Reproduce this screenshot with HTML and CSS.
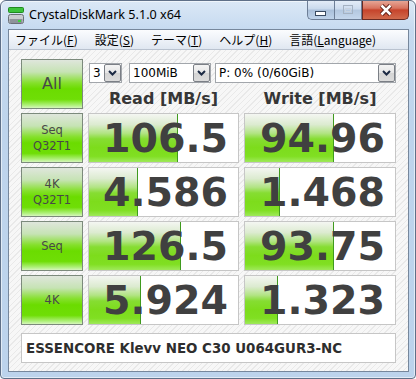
FILE: index.html
```html
<!DOCTYPE html>
<html lang="ja">
<head>
  <meta charset="UTF-8">
  <title>CrystalDiskMark 5.1.0 x64</title>
  <link rel="stylesheet" href="styles.css">
</head>
<body>
  <div class="window">
    <div class="titlebar">
      <svg class="app-icon" width="17" height="18" viewBox="0 0 17 18">
        <rect x="0.5" y="0.5" width="15" height="5" rx="1" fill="#3cc23c" stroke="#1f8a1f"/>
        <rect x="0.5" y="7.5" width="15" height="9" rx="2" fill="#c9ccd0" stroke="#6b7078"/>
        <rect x="1.5" y="12" width="13" height="4" fill="#8e939a"/>
        <rect x="10" y="13" width="3" height="2" fill="#39d639"/>
      </svg>
      <span class="title">CrystalDiskMark 5.1.0 x64</span>
      <div class="caption-buttons">
        <div class="cap-btn cap-min">
          <svg width="12" height="6" viewBox="0 0 12 6"><rect x="0.5" y="1.5" width="10" height="4" fill="#fff" stroke="#394a60"/></svg>
        </div>
        <div class="cap-btn cap-max">
          <svg width="12" height="10" viewBox="0 0 12 10"><rect x="1.5" y="0.5" width="9" height="8" fill="none" stroke="#a5b2c2"/><rect x="3.5" y="3.5" width="5" height="3" fill="none" stroke="#c8d2de"/></svg>
        </div>
        <div class="cap-btn cap-close">
          <svg width="14" height="12" viewBox="0 0 14 12">
            <path d="M2.5 1.5 L11.5 10.5 M11.5 1.5 L2.5 10.5" stroke="#5a1c14" stroke-width="4.5"/>
            <path d="M2.5 1.5 L11.5 10.5 M11.5 1.5 L2.5 10.5" stroke="#fff" stroke-width="2.5"/>
          </svg>
        </div>
      </div>
    </div>

    <div class="client">
      <div class="menubar">
        <span>ファイル(<u>F</u>)</span>
        <span>設定(<u>S</u>)</span>
        <span>テーマ(<u>T</u>)</span>
        <span>ヘルプ(<u>H</u>)</span>
        <span>言語(<u>L</u>anguage)</span>
      </div>

      <div class="content">
        <div class="grid">
          <div class="test-btn btn-all">All</div>
          <div class="top-area">
            <div class="selects">
              <div class="combo combo-count"><span>3</span><i class="arrow"><svg width="9" height="6" viewBox="0 0 9 6"><path d="M1 1 L4.5 4.5 L8 1" fill="none" stroke="#1c2a44" stroke-width="2"/></svg></i></div>
              <div class="combo combo-size"><span>100MiB</span><i class="arrow"><svg width="9" height="6" viewBox="0 0 9 6"><path d="M1 1 L4.5 4.5 L8 1" fill="none" stroke="#1c2a44" stroke-width="2"/></svg></i></div>
              <div class="combo combo-drive"><span>P: 0% (0/60GiB)</span><i class="arrow"><svg width="9" height="6" viewBox="0 0 9 6"><path d="M1 1 L4.5 4.5 L8 1" fill="none" stroke="#1c2a44" stroke-width="2"/></svg></i></div>
            </div>
            <div class="headers">
              <div class="col-head">Read [MB/s]</div>
              <div class="col-head">Write [MB/s]</div>
            </div>
          </div>

          <div class="test-btn">Seq<br>Q32T1</div>
          <div class="result"><div class="bar" style="width: 60%"></div><div class="num">106.5</div></div>
          <div class="result"><div class="bar" style="width: 59%"></div><div class="num">94.96</div></div>

          <div class="test-btn">4K<br>Q32T1</div>
          <div class="result"><div class="bar" style="width: 33%"></div><div class="num">4.586</div></div>
          <div class="result"><div class="bar" style="width: 23%"></div><div class="num">1.468</div></div>

          <div class="test-btn">Seq</div>
          <div class="result"><div class="bar" style="width: 62%"></div><div class="num">126.5</div></div>
          <div class="result"><div class="bar" style="width: 59%"></div><div class="num">93.75</div></div>

          <div class="test-btn">4K</div>
          <div class="result"><div class="bar" style="width: 35%"></div><div class="num">5.924</div></div>
          <div class="result"><div class="bar" style="width: 22%"></div><div class="num">1.323</div></div>
        </div>

        <div class="comment">ESSENCORE Klevv NEO C30 U064GUR3-NC</div>
      </div>
    </div>
  </div>
</body>
</html>
```

FILE: styles.css
```css
html, body {
  margin: 0;
  padding: 0;
  background-color: #fff;
}

body {
  width: 416px;
  height: 379px;
  overflow: hidden;
  font-family: 'DejaVu Sans', Verdana, sans-serif;
}

.window {
  width: 414px;
  height: 377px;
  border: 1px solid #5f7088;
  border-radius: 6px 6px 4px 4px;
  background: linear-gradient(#dbe8f6 0px, #c6daf0 28px, #bed4ec 120px, #bcd3ec 100%);
  box-shadow: inset 0 0 0 1px rgba(255, 255, 255, 0.55);
}

.titlebar {
  height: 28px;
  display: flex;
  align-items: flex-start;
}

.app-icon {
  margin: 6px 0 0 7px;
}

.title {
  margin: 5px 0 0 4px;
  font-family: 'Noto Sans', 'Open Sans', sans-serif;
  font-size: 12.6px;
  line-height: 18px;
  color: #000;
}

.caption-buttons {
  margin-left: auto;
  margin-right: 6px;
  display: flex;
  height: 19px;
}

.cap-btn {
  height: 19px;
  box-sizing: border-box;
  border: 1px solid #6d7e96;
  border-top: none;
  display: flex;
  align-items: center;
  justify-content: center;
}

.cap-min {
  width: 27px;
  border-radius: 0 0 0 5px;
  border-right: none;
  background: linear-gradient(#e3ecf7 0%, #c9d9ec 45%, #a9bfd9 50%, #bfd3ea 100%);
}

.cap-min svg {
  margin-top: 5px;
}

.cap-max {
  width: 28px;
  background: linear-gradient(#e3ecf7 0%, #ccdbee 45%, #b3c7df 50%, #c5d7ec 100%);
}

.cap-close {
  width: 47px;
  border-radius: 0 0 5px 0;
  border-color: #6a2a22;
  background: linear-gradient(#e6a595 0%, #d8735f 40%, #c6442c 50%, #d06a4c 100%);
}

.client {
  margin: 0 6px 0 7px;
  width: 399px;
  border: 1px solid #76879c;
  background-color: #f4f4f4;
}

.menubar {
  height: 19px;
  border-bottom: 1px solid #b9c2cf;
  background: linear-gradient(#fbfcfe 0%, #eef2f8 50%, #e0e7f1 100%);
  display: flex;
  align-items: center;
  gap: 17px;
  padding-left: 6px;
  font-family: 'Noto Sans CJK JP', 'Noto Sans', sans-serif;
  font-size: 12px;
  color: #000;
}

.menubar u {
  text-decoration-thickness: 1px;
  text-underline-offset: 1px;
}

.content {
  height: 305px;
  padding: 9px 12px 7px 12px;
  background-color: #f6f6f6;
  background-image: repeating-linear-gradient(-45deg, #f7f7f7 0px, #f7f7f7 3px, #e9e9e9 3px, #e9e9e9 4px);
}

.grid {
  display: grid;
  grid-template-columns: 62px 151px 152px;
  grid-template-rows: repeat(5, 50px);
  column-gap: 5px;
  row-gap: 4px;
}

.test-btn {
  box-sizing: border-box;
  border: 1px solid #7c8a7c;
  background: linear-gradient(#dfe6dc 0%, #c6e3b4 25%, #84e02a 48%, #6bdc00 60%, #6fde06 82%, #aef079 94%, #d6f6bd 100%);
  display: flex;
  align-items: center;
  justify-content: center;
  text-align: center;
  font-size: 11.5px;
  line-height: 16px;
  color: #484848;
}

.btn-all {
  font-size: 16px;
}

.top-area {
  grid-column: 2 / 4;
  display: flex;
  flex-direction: column;
}

.selects {
  margin-top: 4px;
  height: 20px;
  display: flex;
}

.combo {
  box-sizing: border-box;
  height: 20px;
  border: 1px solid #a2a6ab;
  background-color: #fff;
  display: flex;
  align-items: center;
  font-size: 12px;
  color: #000;
}

.combo span {
  padding-left: 3px;
  flex: 1;
}

.combo .arrow {
  box-sizing: border-box;
  width: 17px;
  height: 18px;
  border: 1px solid #7b7f86;
  border-radius: 2px;
  background: linear-gradient(#f4f4f4 0%, #e6e6e6 50%, #d4d4d4 51%, #dcdcdc 100%);
  display: flex;
  align-items: center;
  justify-content: center;
}

.combo-count {
  width: 33px;
  margin-left: 1px;
}

.combo-size {
  width: 82px;
  margin-left: 7px;
}

.combo-drive {
  flex: 1;
  margin-left: 4px;
}

.headers {
  margin-top: 5px;
  height: 21px;
  display: grid;
  grid-template-columns: 151px 152px;
  column-gap: 5px;
}

.col-head {
  text-align: center;
  font-weight: bold;
  font-size: 16px;
  line-height: 21px;
  color: #363636;
}

.result {
  box-sizing: border-box;
  border: 1px solid #c6c6c6;
  background-color: #fff;
  display: grid;
}

.bar {
  grid-area: 1 / 1;
  box-sizing: border-box;
  height: 100%;
  border-right: 1px solid #3f9a1e;
  background: linear-gradient(#f4f6f2 0%, #dcebd0 22%, #b2e484 40%, #86dd32 52%, #7ddc1c 70%, #80df22 88%, #9fe95a 100%);
}

.num {
  grid-area: 1 / 1;
  align-self: center;
  justify-self: end;
  padding-right: 10px;
  font-weight: bold;
  font-size: 39.5px;
  line-height: 46px;
  color: #404040;
}

.comment {
  margin-top: 8px;
  height: 30px;
  box-sizing: border-box;
  border: 1px solid #c6c6c6;
  background-color: #fff;
  display: flex;
  align-items: center;
  padding-left: 4px;
  font-weight: bold;
  font-size: 13.4px;
  color: #2e2e2e;
}
```
